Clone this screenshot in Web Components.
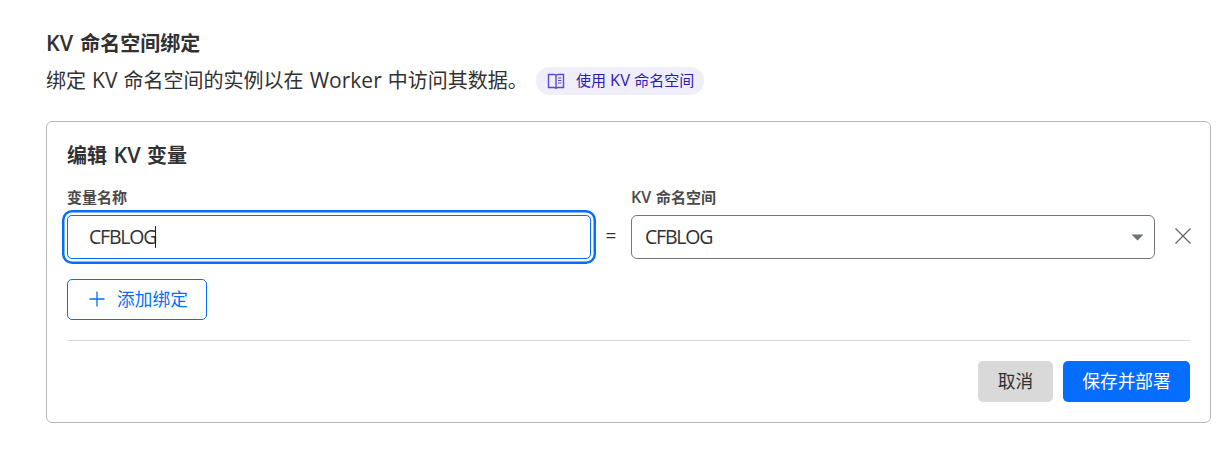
<!DOCTYPE html>
<html lang="zh-CN">
<head>
<meta charset="utf-8">
<title>KV 命名空间绑定</title>
<style>
body{margin:0;background:#fff;color:#313131;font-family:"Open Sans","Noto Sans CJK SC",sans-serif;font-size:20px;font-kerning:normal}
</style>
</head>
<body>
<kv-page></kv-page>
<script>
function define(name, html){
  const t=document.createElement('template');
  t.innerHTML=html;
  customElements.define(name,class extends HTMLElement{
    constructor(){super();this.attachShadow({mode:'open'}).append(t.content.cloneNode(true));}
  });
}
define('docs-pill',`<style>
:host{display:inline-flex;align-items:center;box-sizing:border-box;width:168px;height:28px;border-radius:14px;background:#f1eefc;color:#2f1ab0;font-size:15px;line-height:26px;padding-left:11px;white-space:nowrap}
svg{width:18px;height:18px;margin-right:11px;flex:none}
span{word-spacing:.2px;padding-bottom:2px}
::slotted(b){font-weight:400;font-size:16.5px;line-height:1}
</style>
<svg viewBox="0 0 18 18" fill="none" stroke="#5a45d6" stroke-width="1.4"><path d="M1.500 2.500H7.400L9 3.300L10.600 2.500H16.500V15.500H10.600L9 16.300L7.400 15.500H1.500Z"/><path d="M9 3.300V16"/><path d="M11 6H14.500M11 8.500H14.500M11 11H14.500" stroke-width="1.200"/></svg>
<span><slot></slot></span>`);
define('field-box',`<style>
:host{display:flex;flex-direction:column}
label{display:block;height:22px;line-height:22px;margin-bottom:7px;font-size:15px;font-weight:600;color:#4a4a4a;white-space:nowrap;word-spacing:.8px}
</style><label><slot name="label"></slot></label><slot></slot>`);
define('text-input',`<style>
:host{display:flex;align-items:center;box-sizing:border-box;height:44px;border:1px solid #056dff;border-radius:5px;padding-left:21px;box-shadow:0 0 0 2.500px #fff,0 0 0 5px #056dff;white-space:nowrap}
span{font-size:19.5px;line-height:42px;letter-spacing:-1.200px}
i{width:1px;height:22px;background:#222;margin-left:-1px}
</style><span><slot></slot></span><i></i>`);
define('select-box',`<style>
:host{display:flex;align-items:center;justify-content:space-between;box-sizing:border-box;height:44px;border:1px solid #72767a;border-radius:6px;padding:0 10px 0 13px;white-space:nowrap}
span{font-size:19.5px;line-height:42px;letter-spacing:-1.200px}
svg{width:13px;height:7px;display:block}
</style><span><slot></slot></span><svg viewBox="0 0 13 7"><path d="M.5.500H12.500L6.500 6.500Z" fill="#6c7278"/></svg>`);
define('action-button',`<style>
:host{display:inline-flex;align-items:center;justify-content:center;box-sizing:border-box;height:41px;border-radius:5px;font-size:17.7px;line-height:41px;white-space:nowrap}
:host([kind=outline]){width:140px;border:1px solid #056dff;color:#056dff;padding-left:3px}
:host([kind=gray]){width:75px;background:#d9d9d9}
:host([kind=primary]){width:127px;background:#056dff;color:#fff}
</style><slot name="icon"></slot><slot></slot>`);
define('plus-icon',`<style>:host{display:block;width:16px;height:16px;margin:-2px 12px 0 0}svg{display:block}</style>
<svg width="16" height="16" fill="none" stroke="#056dff" stroke-width="1.3"><path d="M8 .5V15.500M.5 8H15.500"/></svg>`);
define('close-icon',`<style>:host{display:block;width:16px;height:16px}svg{display:block}</style>
<svg width="16" height="16" fill="none" stroke="#666" stroke-width="1.3"><path d="M.5.500L15.500 15.500M15.500.5L.5 15.500"/></svg>`);
define('binding-card',`<style>
:host{display:block;box-sizing:border-box;height:302px;border:1px solid #b6b6b6;border-radius:6px;padding:19px 20px 20px}
h3{margin:0 0 15px;height:30px;line-height:30px;font-size:20px;font-weight:600;word-spacing:1.3px}
h3 b{font-weight:600;font-size:21.5px;line-height:1}
field-box b{font-weight:600;font-size:16px;line-height:1}
.row{display:grid;grid-template-columns:524px 40px 524px 28px 1fr;height:73px}
.eq{padding-top:27px;line-height:44px;text-align:center;font-size:19px}
.x{grid-column:5;padding-top:42px;margin-left:-8px}
.add{display:flex;margin-top:20px}
.foot{display:flex;justify-content:flex-end;gap:10px;margin-top:20px;border-top:1px solid #d9d9d9;padding-top:20px}
</style>
<h3>编辑 <b>KV</b> 变量</h3>
<div class="row">
<field-box><span slot="label">变量名称</span><text-input>CFBLOG</text-input></field-box>
<div class="eq">=</div>
<field-box><span slot="label"><b>KV</b> 命名空间</span><select-box>CFBLOG</select-box></field-box>
<div class="x"><close-icon></close-icon></div>
</div>
<div class="add"><action-button kind="outline"><plus-icon slot="icon"></plus-icon>添加绑定</action-button></div>
<div class="foot"><action-button kind="gray">取消</action-button><action-button kind="primary">保存并部署</action-button></div>`);
define('kv-page',`<style>
:host{display:block;box-sizing:border-box;width:1222px;height:468px;padding:29px 11px 0 46px}
h2{margin:0;height:30px;line-height:30px;font-size:20px;font-weight:600;word-spacing:1.900px}
h2 b{font-weight:600;font-size:21.5px;line-height:1}
.desc{display:flex;align-items:center;height:30px;margin:7px 0 25px;white-space:nowrap}
.desc span{width:490px;line-height:30px;word-spacing:.9px}
.desc span b{font-weight:400;font-size:21px;line-height:1}
</style>
<h2><b>KV</b> 命名空间绑定</h2>
<div class="desc"><span>绑定 <b>KV</b> 命名空间的实例以在 <b>Worker</b> 中访问其数据。</span><docs-pill>使用 <b>KV</b> 命名空间</docs-pill></div>
<binding-card></binding-card>`);
</script>
</body>
</html>
